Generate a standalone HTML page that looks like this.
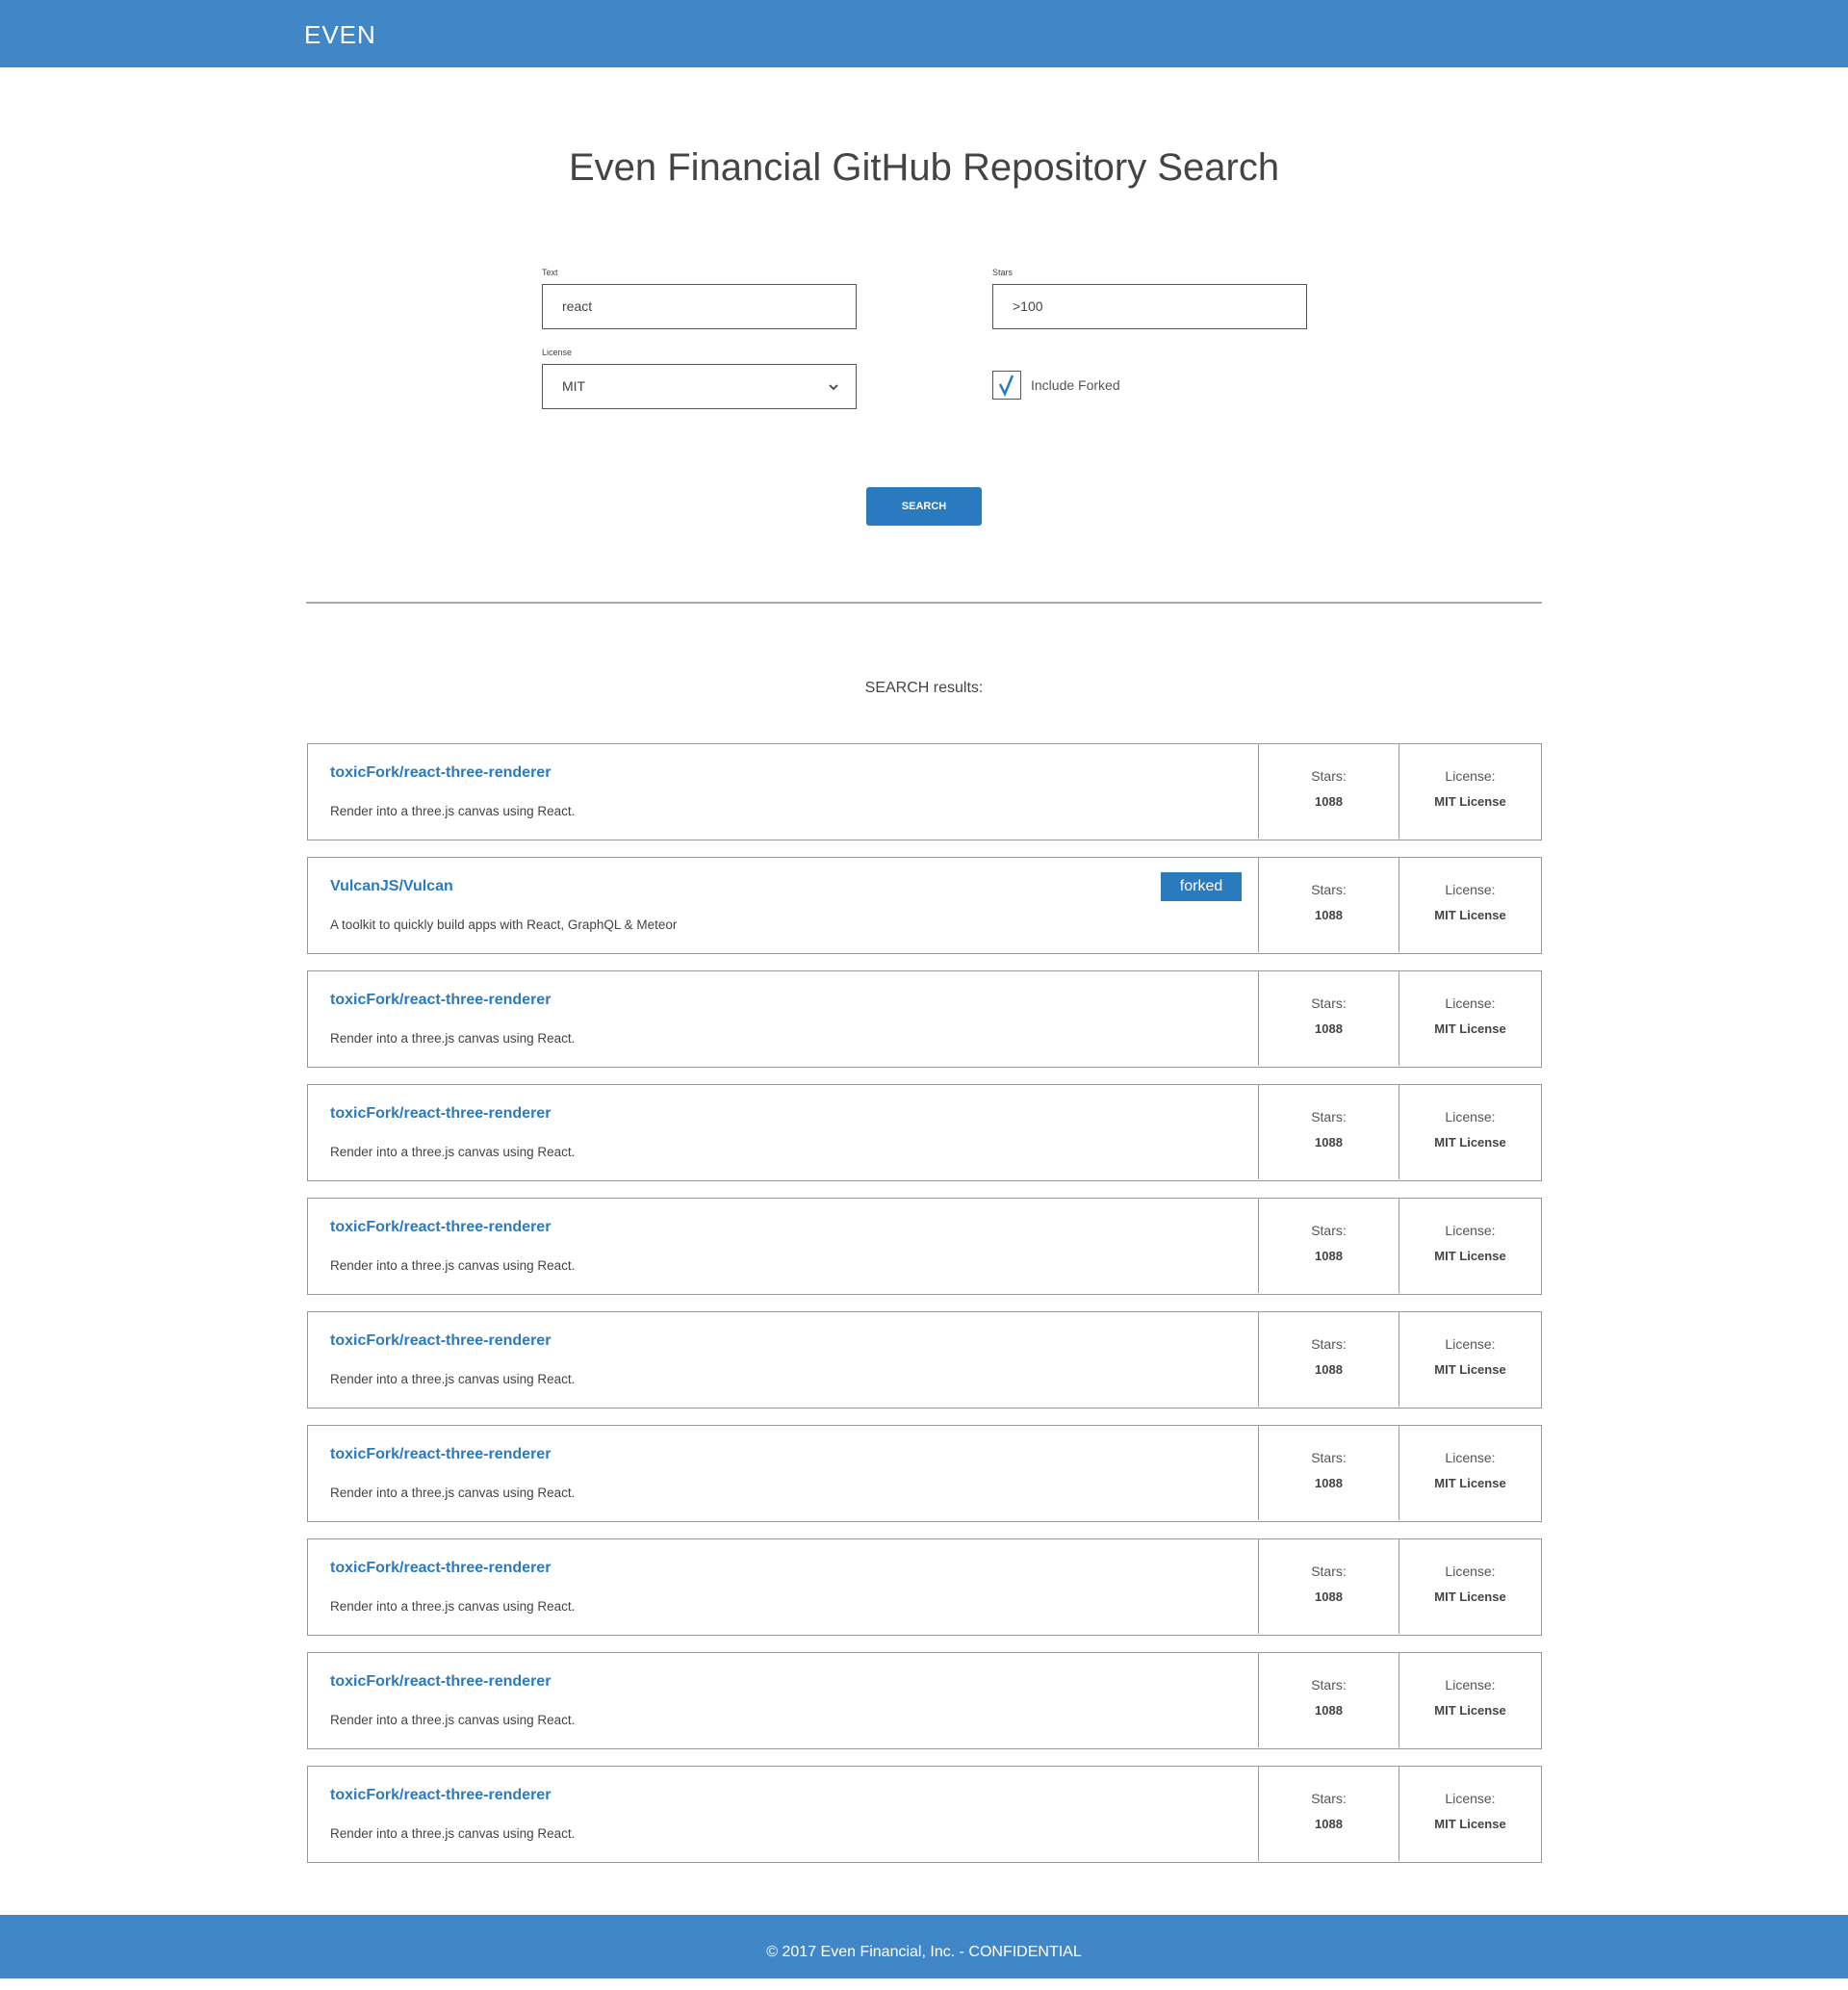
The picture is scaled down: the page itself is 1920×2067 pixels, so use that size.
<!DOCTYPE html>
<html><head><meta charset="utf-8"><style>
*{box-sizing:border-box;margin:0;padding:0}
body{width:1920px;height:2055px;position:relative;background:#fff;font-family:"Liberation Sans",Arial,sans-serif;color:#444;overflow:hidden}
.hdr{position:absolute;left:0;top:0;width:1920px;height:70px;background:#4187c7}
.logo{position:absolute;left:316px;top:21px;color:#fff;font-size:26px;letter-spacing:1px;font-weight:300}
h1{position:absolute;left:0;width:1920px;top:152px;text-align:center;font-weight:normal;font-size:40px;color:#444}
.lbl{position:absolute;font-size:9px;color:#444}
.inp{position:absolute;width:327px;height:47px;border:1px solid #555;font-size:14px;padding-left:20px;line-height:45px;color:#444}
.cb{position:absolute;left:1031px;top:385px;width:30px;height:30px;border:1px solid #555}
.btn{position:absolute;left:900px;top:506px;width:120px;height:40px;background:#2a7abf;border-radius:3px;color:#fff;font-size:11px;font-weight:bold;text-align:center;line-height:40px}
.hr{position:absolute;left:318px;top:625px;width:1284px;height:2px;background:#aaa}
.res{position:absolute;left:0;width:1920px;top:706px;text-align:center;font-size:16px;color:#444}
.row{position:absolute;left:319px;width:1283px;height:101px;border:1.5px solid #999}
.t{position:absolute;left:23px;top:21px;font-size:16px;font-weight:bold;color:#2a7abf}
.d{position:absolute;left:23px;top:62px;font-size:13.5px;color:#444}
.c1,.c2{position:absolute;top:0;height:98px;border-left:1px solid #9a9a9a;text-align:center;font-size:14px;color:#555}
.c1{left:987px;width:146px}.c2{left:1133px;width:148px}
.c1 span,.c2 span{display:block}
.a{margin-top:25px}.b{margin-top:11px;font-weight:bold;font-size:13px;color:#444}
.fk{position:absolute;left:886px;top:15px;width:84px;height:30px;background:#2a7abf;color:#fff;font-size:16px;text-align:center;line-height:30px}
.ftr{position:absolute;left:0;top:1989px;width:1920px;height:66px;background:#4187c7;color:#fff;text-align:center;font-size:16px;line-height:78px}
</style></head><body>
<div class="hdr"><div class="logo">EVEN</div></div>
<h1>Even Financial GitHub Repository Search</h1>
<div class="lbl" style="left:563px;top:278px">Text</div>
<div class="inp" style="left:563px;top:295px">react</div>
<div class="lbl" style="left:1031px;top:278px">Stars</div>
<div class="inp" style="left:1031px;top:295px">&gt;100</div>
<div class="lbl" style="left:563px;top:361px">License</div>
<div class="inp" style="left:563px;top:378px">MIT<svg style="position:absolute;right:18px;top:19px" width="10" height="8" viewBox="0 0 10 8"><path d="M1 2l4 4 4-4" fill="none" stroke="#444" stroke-width="1.8"/></svg></div>
<div class="cb"><svg width="28" height="28" viewBox="0 0 28 28"><path d="M7 13l5 10 8-19" fill="none" stroke="#2a7abf" stroke-width="2.5"/></svg></div>
<div style="position:absolute;left:1071px;top:392px;font-size:14px;color:#555">Include Forked</div>
<div class="btn">SEARCH</div>
<div class="hr"></div>
<div class="res">SEARCH results:</div>

<div class="row" style="top:772px"><div class="t">toxicFork/react-three-renderer</div><div class="d">Render into a three.js canvas using React.</div><div class="c1"><span class="a">Stars:</span><span class="b">1088</span></div><div class="c2"><span class="a">License:</span><span class="b">MIT License</span></div></div>
<div class="row" style="top:890px"><div class="t">VulcanJS/Vulcan</div><div class="fk">forked</div><div class="d">A toolkit to quickly build apps with React, GraphQL &amp; Meteor</div><div class="c1"><span class="a">Stars:</span><span class="b">1088</span></div><div class="c2"><span class="a">License:</span><span class="b">MIT License</span></div></div>
<div class="row" style="top:1008px"><div class="t">toxicFork/react-three-renderer</div><div class="d">Render into a three.js canvas using React.</div><div class="c1"><span class="a">Stars:</span><span class="b">1088</span></div><div class="c2"><span class="a">License:</span><span class="b">MIT License</span></div></div>
<div class="row" style="top:1126px"><div class="t">toxicFork/react-three-renderer</div><div class="d">Render into a three.js canvas using React.</div><div class="c1"><span class="a">Stars:</span><span class="b">1088</span></div><div class="c2"><span class="a">License:</span><span class="b">MIT License</span></div></div>
<div class="row" style="top:1244px"><div class="t">toxicFork/react-three-renderer</div><div class="d">Render into a three.js canvas using React.</div><div class="c1"><span class="a">Stars:</span><span class="b">1088</span></div><div class="c2"><span class="a">License:</span><span class="b">MIT License</span></div></div>
<div class="row" style="top:1362px"><div class="t">toxicFork/react-three-renderer</div><div class="d">Render into a three.js canvas using React.</div><div class="c1"><span class="a">Stars:</span><span class="b">1088</span></div><div class="c2"><span class="a">License:</span><span class="b">MIT License</span></div></div>
<div class="row" style="top:1480px"><div class="t">toxicFork/react-three-renderer</div><div class="d">Render into a three.js canvas using React.</div><div class="c1"><span class="a">Stars:</span><span class="b">1088</span></div><div class="c2"><span class="a">License:</span><span class="b">MIT License</span></div></div>
<div class="row" style="top:1598px"><div class="t">toxicFork/react-three-renderer</div><div class="d">Render into a three.js canvas using React.</div><div class="c1"><span class="a">Stars:</span><span class="b">1088</span></div><div class="c2"><span class="a">License:</span><span class="b">MIT License</span></div></div>
<div class="row" style="top:1716px"><div class="t">toxicFork/react-three-renderer</div><div class="d">Render into a three.js canvas using React.</div><div class="c1"><span class="a">Stars:</span><span class="b">1088</span></div><div class="c2"><span class="a">License:</span><span class="b">MIT License</span></div></div>
<div class="row" style="top:1834px"><div class="t">toxicFork/react-three-renderer</div><div class="d">Render into a three.js canvas using React.</div><div class="c1"><span class="a">Stars:</span><span class="b">1088</span></div><div class="c2"><span class="a">License:</span><span class="b">MIT License</span></div></div>

<div class="ftr">© 2017 Even Financial, Inc. - CONFIDENTIAL</div>
</body></html>
